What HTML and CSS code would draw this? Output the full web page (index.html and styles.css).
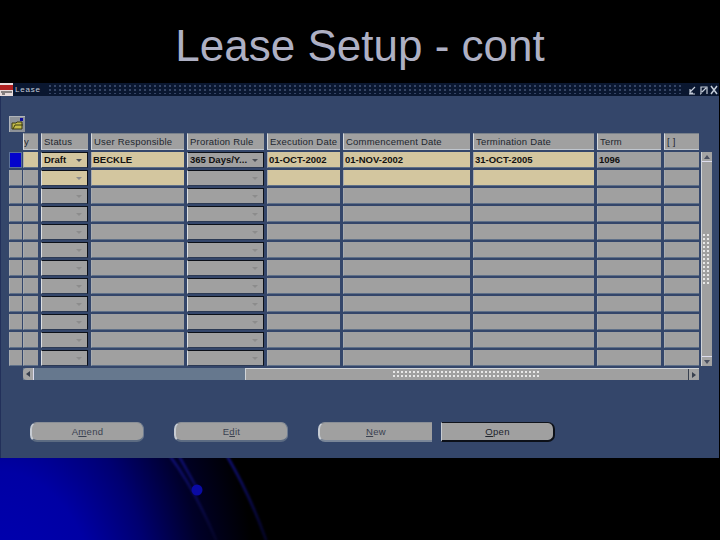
FILE: index.html
```html
<!DOCTYPE html>
<html lang="en">
<head>
<meta charset="utf-8">
<title>Lease Setup - cont</title>
<link rel="stylesheet" href="styles.css">
</head>
<body>
<div class="slide">
  <svg class="decor" width="720" height="540" viewBox="0 0 720 540">
    <defs>
      <linearGradient id="fade" x1="0" y1="456" x2="0" y2="540" gradientUnits="userSpaceOnUse">
        <stop offset="0" stop-color="#10107a"/>
        <stop offset="1" stop-color="#05052a"/>
      </linearGradient>
    </defs>
    <g class="rays" fill="none" stroke="url(#fade)" stroke-linecap="round">
      <path d="M170 456 Q195 490 216 540"/>
      <path d="M179 456 L199 492"/>
      <path d="M227 456 Q250 495 266 540"/>
    </g>
    <circle class="ball" cx="197" cy="490" r="5.5"/>
  </svg>
  <h1 class="title">Lease Setup - cont</h1>
  <div class="window">
    <div class="titlebar">
      <svg class="logo" width="13" height="13" viewBox="0 0 13 13"><rect width="13" height="13" fill="#e8dcdc"/><rect y="2" width="13" height="5" fill="#b02020"/><path d="M1 9h11M2 11h3" stroke="#222" stroke-width="1"/></svg>
      <span class="wintitle">Lease</span>
      <div class="dots"></div>
      <svg class="controls" width="30" height="12" viewBox="0 0 30 12"><g fill="none" stroke="#c4ccd8" stroke-width="1.2"><path d="M1 10h6M7 3 2 8M2 5v4h3"/><path d="M12 10h1M13 10V3h6v7M14 8l4-4"/><path d="M23 2l6 8M29 2l-6 8" stroke-width="1.5"/></g></svg>
    </div>
    <div class="content">
      <button class="toolbtn" type="button" aria-label="Open folder">
        <svg width="13" height="13" viewBox="0 0 13 13"><path d="M1 5h4l1-1h5v7H1z" fill="#c4bc4a" stroke="#3a3a10"/><path d="M2 11l2-4h8" fill="none" stroke="#3a3a10"/><rect x="9" y="0" width="3" height="3" fill="#1010a0"/></svg>
      </button>
      <div class="tablewrap">
        <div class="table">
          <div class="row head">
            <div class="none"></div><div class="h hy">y</div><div class="h">Status</div><div class="h">User Responsible</div><div class="h">Proration Rule</div><div class="h">Execution Date</div><div class="h">Commencement Date</div><div class="h">Termination Date</div><div class="h">Term</div><div class="h">[ ]</div>
          </div>
          <div class="row">
            <div class="c ind cur"></div><div class="c tan"></div><div class="c combo tan strong">Draft</div><div class="c tan">BECKLE</div><div class="c combo strong">365 Days/Y...</div><div class="c tan">01-OCT-2002</div><div class="c tan">01-NOV-2002</div><div class="c tan">31-OCT-2005</div><div class="c">1096</div><div class="c"></div>
          </div>
          <div class="row">
            <div class="c ind"></div><div class="c"></div><div class="c combo tan"></div><div class="c tan"></div><div class="c combo"></div><div class="c tan"></div><div class="c tan"></div><div class="c tan"></div><div class="c"></div><div class="c"></div>
          </div>
          <div class="row"><div class="c ind"></div><div class="c"></div><div class="c combo"></div><div class="c"></div><div class="c combo"></div><div class="c"></div><div class="c"></div><div class="c"></div><div class="c"></div><div class="c"></div></div>
          <div class="row"><div class="c ind"></div><div class="c"></div><div class="c combo"></div><div class="c"></div><div class="c combo"></div><div class="c"></div><div class="c"></div><div class="c"></div><div class="c"></div><div class="c"></div></div>
          <div class="row"><div class="c ind"></div><div class="c"></div><div class="c combo"></div><div class="c"></div><div class="c combo"></div><div class="c"></div><div class="c"></div><div class="c"></div><div class="c"></div><div class="c"></div></div>
          <div class="row"><div class="c ind"></div><div class="c"></div><div class="c combo"></div><div class="c"></div><div class="c combo"></div><div class="c"></div><div class="c"></div><div class="c"></div><div class="c"></div><div class="c"></div></div>
          <div class="row"><div class="c ind"></div><div class="c"></div><div class="c combo"></div><div class="c"></div><div class="c combo"></div><div class="c"></div><div class="c"></div><div class="c"></div><div class="c"></div><div class="c"></div></div>
          <div class="row"><div class="c ind"></div><div class="c"></div><div class="c combo"></div><div class="c"></div><div class="c combo"></div><div class="c"></div><div class="c"></div><div class="c"></div><div class="c"></div><div class="c"></div></div>
          <div class="row"><div class="c ind"></div><div class="c"></div><div class="c combo"></div><div class="c"></div><div class="c combo"></div><div class="c"></div><div class="c"></div><div class="c"></div><div class="c"></div><div class="c"></div></div>
          <div class="row"><div class="c ind"></div><div class="c"></div><div class="c combo"></div><div class="c"></div><div class="c combo"></div><div class="c"></div><div class="c"></div><div class="c"></div><div class="c"></div><div class="c"></div></div>
          <div class="row"><div class="c ind"></div><div class="c"></div><div class="c combo"></div><div class="c"></div><div class="c combo"></div><div class="c"></div><div class="c"></div><div class="c"></div><div class="c"></div><div class="c"></div></div>
          <div class="row"><div class="c ind"></div><div class="c"></div><div class="c combo"></div><div class="c"></div><div class="c combo"></div><div class="c"></div><div class="c"></div><div class="c"></div><div class="c"></div><div class="c"></div></div>
        </div>
        <div class="vscroll">
          <div class="varrow up"></div>
          <div class="vdots"></div>
          <div class="varrow down"></div>
        </div>
      </div>
      <div class="hscroll">
        <div class="harrow left"></div>
        <div class="htrack"></div>
        <div class="hthumb">
          <div class="hdots"></div>
          <div class="harrow right"></div>
        </div>
      </div>
      <div class="buttons">
        <button class="btn" type="button">A<u>m</u>end</button>
        <button class="btn" type="button">E<u>d</u>it</button>
        <button class="btn new" type="button"><u>N</u>ew</button>
        <button class="btn open" type="button"><u>O</u>pen</button>
      </div>
    </div>
  </div>
</div>
</body>
</html>
```
FILE: styles.css
```css
* { box-sizing: border-box; }
html, body { margin: 0; padding: 0; }
body { width: 720px; height: 540px; overflow: hidden; background: #000; }
.slide {
  position: relative;
  width: 720px;
  height: 540px;
  background: radial-gradient(ellipse 260px 420px at 0 640px, #0000b8 0, #0000a4 40%, #000070 60%, #000028 80%, rgba(0,0,0,0) 100%), #000;
  font-family: "Liberation Sans", Arial, sans-serif;
}
.decor { position: absolute; left: 0; top: 0; }
.rays { stroke-width: 2.5; filter: blur(0.8px); }
.ball { fill: #0a0aa4; filter: blur(0.5px); }
.title {
  position: relative;
  height: 83px;
  margin: 0;
  padding-top: 23px;
  text-align: center;
  font-size: 44px;
  line-height: 46px;
  font-weight: 400;
  color: #aeb0c4;
}
.window {
  position: relative;
  width: 719px;
  height: 375px;
  background: #34466a;
  border-left: 1px solid #22305a;
}
.titlebar {
  height: 13px;
  display: flex;
  align-items: center;
  background: #0a1730;
  margin-left: -1px;
}
.logo { flex: none; }
.wintitle {
  margin: 0 8px 0 2px;
  font-size: 8px;
  letter-spacing: 0.8px;
  color: #c6cedc;
}
.dots {
  flex: 1;
  height: 9px;
  background-image: radial-gradient(circle at 1px 1px, #46587a 0.6px, rgba(0,0,0,0) 1px);
  background-size: 5px 4px;
}
.controls { flex: none; margin: 0 1px 0 4px; }
.content { padding: 20px 0 0 8px; }
.toolbtn {
  display: flex;
  align-items: center;
  justify-content: center;
  width: 16px;
  height: 16px;
  padding: 0;
  background: #8d9299;
  border: 0;
  border-top: 1px solid #b0b4ba;
  border-left: 1px solid #b0b4ba;
}
.tablewrap { display: flex; gap: 1px; margin-top: 1px; }
.table { width: 691px; display: flex; flex-direction: column; gap: 2px; }
.row {
  display: grid;
  grid-template-columns: 14px 18px 50px 96px 80px 76px 130px 124px 67px 36px;
  height: 16px;
}
.head { height: 17px; }
.h {
  margin-right: 3px;
  background: #a0a0a0;
  border-top: 1px solid #78808a;
  border-left: 1px solid #d4d8dc;
  border-bottom: 1px solid #c0c6ce;
  padding-left: 2px;
  font-size: 9.5px;
  line-height: 15px;
  letter-spacing: 0.2px;
  color: #20262e;
  white-space: nowrap;
  overflow: hidden;
}
.h:last-child, .c:last-child { margin-right: 1px; }
.hy { padding-left: 0; }
.c {
  position: relative;
  margin-right: 3px;
  background: #a0a0a0;
  border-bottom: 1px solid #5f7088;
  border-left: 1px solid #a8acb0;
  padding-left: 1px;
  font-size: 9.5px;
  font-weight: 700;
  line-height: 15px;
  color: #111;
  white-space: nowrap;
  overflow: hidden;
}
.ind { margin-right: 1px; }
.cur { background: #0404cc; border: 1px solid #5a7098; }
.tan { background: #d3c69f; }
.combo {
  border-top: 1px solid #0c1018;
  border-right: 1px solid #0c1018;
  border-bottom: 1px solid #2c3a54;
  border-left: 1px solid #dcdfe2;
  line-height: 14px;
  padding-left: 2px;
}
.combo::after {
  content: "";
  position: absolute;
  right: 5px;
  top: 6px;
  border-left: 3.5px solid transparent;
  border-right: 3.5px solid transparent;
  border-top: 3.5px solid #8c8c8c;
}
.strong::after { border-top-color: #4c5058; }
.vscroll {
  width: 11px;
  margin-top: 19px;
  display: flex;
  flex-direction: column;
  justify-content: space-between;
  align-items: stretch;
  background: #a0a0a0;
  border-left: 1px solid #d0d4d8;
}
.varrow { height: 10px; position: relative; background: #a4a4a4; }
.varrow::after {
  content: "";
  position: absolute;
  left: 2px;
  top: 3px;
  border-left: 3px solid transparent;
  border-right: 3px solid transparent;
}
.up { border-bottom: 1px solid #dde; border-radius: 4px 4px 0 0; }
.up::after { border-bottom: 4px solid #4a5060; }
.down { border-top: 1px solid #dde; border-radius: 0 0 4px 4px; }
.down::after { border-top: 4px solid #4a5060; }
.vdots {
  width: 8px;
  height: 50px;
  margin-left: 1px;
  background-image: radial-gradient(circle at 1px 1px, #e8e8e8 0.8px, rgba(0,0,0,0) 1px);
  background-size: 4px 4px;
}
.hscroll {
  display: flex;
  width: 676px;
  height: 12px;
  margin: 2px 0 0 14px;
  background: #66788e;
}
.harrow { flex: none; width: 11px; position: relative; background: #a4a4a4; }
.harrow::after {
  content: "";
  position: absolute;
  top: 3px;
  border-top: 3px solid transparent;
  border-bottom: 3px solid transparent;
}
.left { border-radius: 4px 0 0 4px; border-right: 1px solid #dde; }
.left::after { left: 3px; border-right: 4px solid #38404e; }
.right { border-radius: 0 4px 4px 0; border-left: 1px solid #38404e; }
.right::after { left: 3px; border-left: 4px solid #38404e; }
.htrack { width: 211px; flex: none; }
.hthumb {
  flex: 1;
  display: flex;
  align-items: center;
  justify-content: flex-end;
  background: #a0a0a0;
  border-top: 1px solid #d0d4d8;
  border-left: 1px solid #d0d4d8;
}
.hthumb .harrow { height: 100%; }
.hdots {
  width: 146px;
  height: 7px;
  margin-right: 149px;
  background-image: radial-gradient(circle at 1px 1px, #e8e8e8 0.8px, rgba(0,0,0,0) 1px);
  background-size: 4px 4px;
}
.buttons {
  display: flex;
  gap: 30px;
  margin: 42px 0 0 21px;
}
.btn {
  width: 114px;
  height: 20px;
  padding: 0;
  border: 0;
  border-top: 1px solid #8a8f96;
  border-left: 2px solid #c6cbd2;
  border-right: 1px solid #6f7c90;
  border-bottom: 2px solid #5c6b82;
  border-radius: 7px;
  background: #a0a0a0;
  font-family: "Liberation Sans", Arial, sans-serif;
  font-size: 9.5px;
  letter-spacing: 0.3px;
  color: #3a4150;
}
.new { border-radius: 7px 0 0 7px; border-right: 0; border-bottom-color: #7a8698; }
.open {
  width: 114px;
  margin-left: -21px;
  border-top: 1px solid #10141c;
  border-left: 1px solid #c6cbd2;
  border-right: 2px solid #0c1018;
  border-bottom: 2px solid #0c1018;
  border-radius: 0 7px 7px 0;
  color: #20242c;
}
```
